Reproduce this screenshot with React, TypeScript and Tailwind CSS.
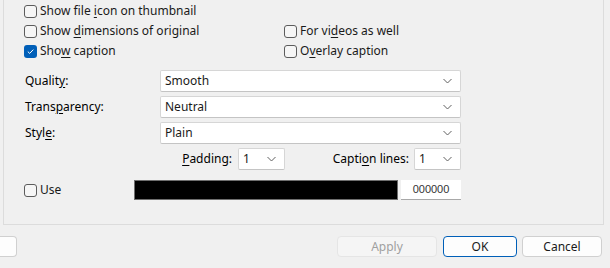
import React from "react";

const font = { fontFamily: '"Segoe UI", "Noto Sans", sans-serif' };

function Box({ checked }: { checked?: boolean }) {
  if (checked)
    return (
      <span className="w-[13px] h-[13px] rounded-[3px] bg-[#005fb8] flex items-center justify-center shrink-0">
        <svg width="9" height="9" viewBox="0 0 9 9">
          <path d="M1.8 4.6 L3.7 6.4 L7.3 2.6" fill="none" stroke="#fff" strokeWidth="1" />
        </svg>
      </span>
    );
  return <span className="w-[13px] h-[13px] rounded-[3px] border border-[#5c5c5c] bg-[#f6f6f6] shrink-0" />;
}

function Check({ checked, children }: { checked?: boolean; children: React.ReactNode }) {
  return (
    <div className="flex items-center h-[20px] gap-[3px]">
      <Box checked={checked} />
      <span className="leading-[20px] text-[#1a1a1a]">{children}</span>
    </div>
  );
}

function U({ children }: { children: React.ReactNode }) {
  return <span className="underline underline-offset-[2px]">{children}</span>;
}

function Chevron() {
  return (
    <svg width="9" height="6" viewBox="0 0 9 6">
      <path d="M0.5 1 L4.5 5 L8.5 1" fill="none" stroke="#606060" strokeWidth="1" />
    </svg>
  );
}

function Combo({ value, className }: { value: string; className: string }) {
  return (
    <div
      className={`h-[22px] bg-white border border-[#d6d6d6] border-b-[#c4c4c4] rounded-[2px] flex items-center justify-between pl-[4px] pr-[8px] ${className}`}
    >
      <span className="text-[#1a1a1a]">{value}</span>
      <Chevron />
    </div>
  );
}

export default function App() {
  return (
    <div className="w-[610px] h-[268px] bg-[#f0f0f0] overflow-hidden text-[12px]" style={font}>
      <div className="ml-[3px] w-[601px] h-[225px] border-l border-r border-b border-[#dcdcdc] pl-[20px] pt-[1px]">
        <Check>
          Show file <U>i</U>con on thumbnail
        </Check>
        <div className="flex">
          <div className="w-[260px]">
            <Check>
              Show <U>d</U>imensions of original
            </Check>
            <Check checked>
              Sho<U>w</U> caption
            </Check>
          </div>
          <div>
            <Check>
              For vi<U>d</U>eos as well
            </Check>
            <Check>
              O<U>v</U>erlay caption
            </Check>
          </div>
        </div>
        <div className="mt-[9px] flex flex-col gap-[4px]">
          <div className="flex items-center">
            <span className="w-[136px] pl-[1px]">
              Qualit<U>y</U>:
            </span>
            <Combo value="Smooth" className="w-[301px]" />
          </div>
          <div className="flex items-center">
            <span className="w-[136px] pl-[1px]">
              Trans<U>p</U>arency:
            </span>
            <Combo value="Neutral" className="w-[301px]" />
          </div>
          <div className="flex items-center">
            <span className="w-[136px] pl-[1px]">
              Styl<U>e</U>:
            </span>
            <Combo value="Plain" className="w-[301px]" />
          </div>
          <div className="flex items-center">
            <span className="w-[214px] text-right pr-[6px]">
              <U>P</U>adding:
            </span>
            <Combo value="1" className="w-[47px]" />
            <span className="w-[129px] text-right pr-[5px]">
              Capti<U>o</U>n lines:
            </span>
            <Combo value="1" className="w-[47px]" />
          </div>
        </div>
        <div className="mt-[10px] flex items-center h-[20px]">
          <div className="w-[110px]">
            <Check>Use</Check>
          </div>
          <div className="w-[264px] h-[20px] bg-black border border-[#6e6e6e]" />
          <div
            className="ml-[3px] w-[60px] h-[20px] bg-white border-b border-[#a8a8a8] flex items-center justify-center text-[11px] text-[#333]"
            style={{ fontFamily: '"Liberation Sans", sans-serif' }}
          >
            000000
          </div>
        </div>
      </div>
      <div className="mt-[11px] flex items-center">
        <div className="w-[17px] h-[21px] bg-[#fdfdfd] border border-[#d0d0d0] rounded-r-[4px] border-l-0" />
        <div className="ml-[320px] w-[100px] h-[21px] bg-[#f5f5f5] border border-[#e5e5e5] rounded-[4px] flex items-center justify-center text-[#a0a0a0]">
          Apply
        </div>
        <div className="ml-[6px] w-[74px] h-[21px] bg-[#fdfdfd] border border-[#005fb8] rounded-[4px] flex items-center justify-center text-[#1a1a1a]">
          OK
        </div>
        <div className="ml-[5px] w-[80px] h-[21px] bg-[#fdfdfd] border border-[#d0d0d0] rounded-[4px] flex items-center justify-center text-[#1a1a1a]">
          Cancel
        </div>
      </div>
    </div>
  );
}
